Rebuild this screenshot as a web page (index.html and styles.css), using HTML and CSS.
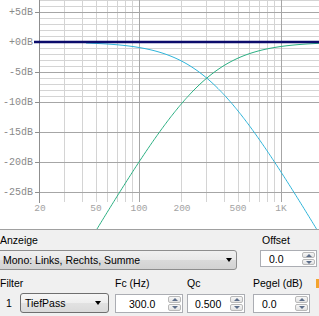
FILE: index.html
```html
<!DOCTYPE html>
<html lang="de">
<head>
    <meta charset="UTF-8">
    <title>Filter</title>
    <link rel="stylesheet" href="styles.css">
</head>
<body>

    <!-- Frequenzgang -->
    <svg class="chart" id="chart" width="319" height="229" viewBox="0 0 319 229">
        <g id="grid-minor"></g>
        <g id="grid-major"></g>
        <g class="ylabels">
            <text x="33" y="15">+5dB</text>
            <text x="33" y="45">+0dB</text>
            <text x="33" y="75">-5dB</text>
            <text x="33" y="105">-10dB</text>
            <text x="33" y="135">-15dB</text>
            <text x="33" y="165">-20dB</text>
            <text x="33" y="195">-25dB</text>
        </g>
        <g class="xlabels">
            <text x="40" y="211">20</text>
            <text x="96" y="211">50</text>
            <text x="139" y="211">100</text>
            <text x="182" y="211">200</text>
            <text x="238" y="211">500</text>
            <text x="281" y="211">1K</text>
        </g>
        <g id="curves"></g>
        <line class="zero" x1="34" y1="42" x2="319" y2="42"></line>
    </svg>

    <!-- Einstellungen -->
    <div class="panel">
        <div class="display-row">
            <div class="display-col">
                <div class="label">Anzeige</div>
                <div class="combo combo-wide">
                    <span>Mono: Links, Rechts, Summe</span>
                    <span class="arrow"></span>
                </div>
            </div>
            <div class="offset-col">
                <div class="label offset-label">Offset</div>
                <div class="spin spin-offset">
                    <span class="spin-value">0.0</span>
                    <span class="spin-buttons"><span class="up"></span><span class="down"></span></span>
                </div>
            </div>
        </div>

        <div class="filter-grid">
            <div class="label">Filter</div>
            <div class="label">Fc (Hz)</div>
            <div class="label">Qc</div>
            <div class="label">Pegel (dB)</div>
            <div class="marker"></div>

            <div class="filter-type">
                <span class="num">1</span>
                <div class="combo combo-small">
                    <span>TiefPass</span>
                    <span class="arrow"></span>
                </div>
            </div>
            <div class="spin spin-fc">
                <span class="spin-value">300.0</span>
                <span class="spin-buttons"><span class="up"></span><span class="down"></span></span>
            </div>
            <div class="spin spin-qc">
                <span class="spin-value">0.500</span>
                <span class="spin-buttons"><span class="up"></span><span class="down"></span></span>
            </div>
            <div class="spin spin-pegel">
                <span class="spin-value">0.0</span>
                <span class="spin-buttons"><span class="up"></span><span class="down"></span></span>
            </div>
        </div>
    </div>

    <script>
        const svgNS = 'http://www.w3.org/2000/svg';
        const gridMinor = document.getElementById('grid-minor');
        const gridMajor = document.getElementById('grid-major');
        const curves = document.getElementById('curves');

        // Frequenz -> x (log), dB -> y
        function xOf(f) { return 139 + 142 * Math.log10(f / 100); }
        function yOf(db) { return 42 - 6 * db; }

        function addLine(parent, x1, y1, x2, y2, cls) {
            const el = document.createElementNS(svgNS, 'line');
            el.setAttribute('x1', x1);
            el.setAttribute('y1', y1);
            el.setAttribute('x2', x2);
            el.setAttribute('y2', y2);
            el.setAttribute('class', cls);
            parent.appendChild(el);
        }

        // horizontale Linien: 1 dB bis -10 dB, danach nur alle 5 dB
        for (let db = 7; db >= -25; db--) {
            const y = yOf(db) + 0.5;
            if (db % 5 === 0) {
                addLine(gridMajor, 39, y, 319, y, 'major');
                addLine(gridMajor, 35, y, 39, y, 'tick');
            } else if (db > -10) {
                addLine(gridMinor, 39, y, 319, y, 'minor');
            }
        }

        // vertikale Linien
        [30, 40, 50, 60, 70, 80, 90, 200, 300, 400, 500, 600, 700, 800, 900].forEach(f => {
            const x = Math.floor(xOf(f)) + 0.5;
            addLine(gridMinor, x, 0, x, 202, 'minor');
        });
        [100, 1000].forEach(f => {
            const x = Math.floor(xOf(f)) + 0.5;
            addLine(gridMajor, x, 0, x, 202, 'major');
        });
        addLine(gridMajor, 39.5, 0, 39.5, 203, 'axis');

        function addCurve(fromX, gain, cls) {
            let d = '';
            for (let x = fromX; x <= 320; x++) {
                const f = 100 * Math.pow(10, (x - 139) / 142);
                const y = yOf(gain(f));
                d += (d ? ' L' : 'M') + x + ' ' + y.toFixed(2);
            }
            const path = document.createElementNS(svgNS, 'path');
            path.setAttribute('d', d);
            path.setAttribute('class', cls);
            curves.appendChild(path);
        }

        const fc = 300;
        addCurve(86, f => -20 * Math.log10(1 + Math.pow(f / fc, 2)), 'lowpass');
        addCurve(39, f => -20 * Math.log10(1 + Math.pow(fc / f, 2)), 'highpass');
    </script>

</body>
</html>
```

FILE: styles.css
```css
* {
    margin: 0;
    padding: 0;
    box-sizing: border-box;
}

body {
    width: 319px;
    height: 316px;
    overflow: hidden;
    background-color: #f0f0f0;
    font-family: "Liberation Sans", Arial, sans-serif;
    font-size: 10.5px;
    color: #000;
}

/* Chart */
.chart {
    display: block;
    background-color: #fff;
}

.chart line {
    shape-rendering: crispEdges;
}

.chart .minor {
    stroke: #d4d4d4;
    stroke-width: 1;
}

.chart .major {
    stroke: #a6a6a6;
    stroke-width: 1;
}

.chart .axis,
.chart .tick {
    stroke: #8f8f8f;
    stroke-width: 1;
}

.chart .zero {
    stroke: #0b0b6b;
    stroke-width: 2.5;
    shape-rendering: auto;
}

.ylabels text {
    font-family: "Liberation Mono", "Courier New", monospace;
    font-size: 10px;
    fill: #8a8a8a;
    text-anchor: end;
}

.xlabels text {
    font-family: "Liberation Mono", "Courier New", monospace;
    font-size: 9.5px;
    fill: #a3a3a3;
    text-anchor: middle;
}

.lowpass,
.highpass {
    fill: none;
    stroke-width: 1;
}

.lowpass {
    stroke: #2fb5da;
}

.highpass {
    stroke: #2bb083;
}

/* Panel */
.panel {
    border-top: 1px solid #a0a0a0;
    height: 87px;
}

.label {
    line-height: 13px;
    white-space: nowrap;
}

.display-row {
    display: flex;
    padding-top: 4px;
}

.display-col {
    width: 260px;
}

.offset-col {
    width: 57px;
}

.offset-label {
    padding-left: 2px;
}

.combo {
    display: flex;
    align-items: center;
    justify-content: space-between;
    height: 20px;
    margin-top: 3px;
    border: 1px solid #8d8d8d;
    border-radius: 3px;
    background: linear-gradient(#f0f0f0, #e8e8e8 50%, #dadada 50%, #d2d2d2);
    white-space: nowrap;
}

.combo-wide {
    width: 240px;
    margin-left: -3px;
    padding: 0 4px 0 5px;
}

.combo-small {
    width: 89px;
    margin-top: 0;
    padding: 0 7px 0 4px;
    border-color: #6f6f6f;
    background: linear-gradient(#f6f6f6, #eeeeee 50%, #e2e2e2 50%, #dadada);
}

.arrow {
    width: 0;
    height: 0;
    border-left: 3.5px solid transparent;
    border-right: 3.5px solid transparent;
    border-top: 4px solid #000;
}

/* Spin boxes */
.spin {
    display: flex;
    height: 19px;
    margin-top: 1px;
    border: 1px solid #abadb3;
    background-color: #fff;
}

.spin-offset {
    width: 57px;
    height: 17px;
    margin-top: 3px;
}

.spin-fc {
    width: 68px;
}

.spin-qc {
    width: 58px;
}

.spin-pegel {
    width: 57px;
}

.spin-value {
    flex: 1;
    display: flex;
    align-items: center;
    padding-left: 8px;
}

.spin-fc .spin-value {
    padding-left: 13px;
}

.spin-qc .spin-value {
    padding-left: 7px;
}

.spin-buttons {
    display: flex;
    flex-direction: column;
    gap: 1px;
    width: 15px;
    padding: 1px;
}

.spin-buttons span {
    flex: 1;
    display: flex;
    align-items: center;
    justify-content: center;
    border: 1px solid #b9b9b9;
    border-radius: 2px;
    background: linear-gradient(#f7f7f7, #e2e2e2);
}

.spin-buttons .up::before,
.spin-buttons .down::before {
    content: "";
    width: 0;
    height: 0;
    border-left: 3px solid transparent;
    border-right: 3px solid transparent;
}

.spin-buttons .up::before {
    border-bottom: 3px solid #5d6e8a;
}

.spin-buttons .down::before {
    border-top: 3px solid #5d6e8a;
}

/* Filter row */
.filter-grid {
    display: grid;
    grid-template-columns: 115px 72px 66px 63px 3px;
    row-gap: 3px;
    padding-top: 7px;
}

.filter-type {
    display: flex;
    align-items: center;
}

.num {
    width: 20px;
    padding-left: 6px;
}

.marker {
    height: 9px;
    margin-top: 2px;
    background-color: #f3a42e;
}
```
